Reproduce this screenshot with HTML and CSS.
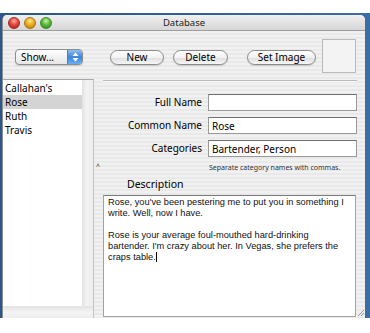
FILE: index.html
```html
<!DOCTYPE html>
<html lang="en">
<head>
    <meta charset="UTF-8">
    <title>Database</title>
    <link rel="stylesheet" href="styles.css">
</head>
<body>

<div class="desktop">
    <div class="window">
        <div class="titlebar">
            <div class="lights">
                <span class="light red"></span>
                <span class="light yellow"></span>
                <span class="light green"></span>
            </div>
            <div class="title">Database</div>
        </div>

        <div class="toolbar">
            <div class="popup">
                <span class="popup-label">Show...</span>
                <span class="stepper">
                    <svg width="7" height="10" viewBox="0 0 7 10"><path d="M3.5 0.5 L6.5 4 L0.5 4 Z M3.5 9.5 L6.5 6 L0.5 6 Z" fill="#fff"/></svg>
                </span>
            </div>
            <button class="pill btn-new">New</button>
            <button class="pill btn-delete">Delete</button>
            <button class="pill btn-image">Set Image</button>
            <div class="image-well"></div>
        </div>

        <div class="content">
            <div class="sidebar">
                <div class="list-row">
                    <ul class="list">
                        <li>Callahan's</li>
                        <li class="selected">Rose</li>
                        <li>Ruth</li>
                        <li>Travis</li>
                    </ul>
                    <div class="list-scroll"></div>
                </div>
                <div class="list-foot"></div>
            </div>

            <div class="editor">
                <div class="separator"></div>
                <div class="fields">
                    <label for="fullName">Full Name</label>
                    <input type="text" id="fullName" value="">
                    <label for="commonName">Common Name</label>
                    <input type="text" id="commonName" value="Rose">
                    <label for="categories">Categories</label>
                    <input type="text" id="categories" value="Bartender, Person">
                </div>
                <div class="hint-row">
                    <span class="caret">^</span>
                    <span class="hint">Separate category names with commas.</span>
                </div>
                <div class="desc-label">Description</div>
                <div class="desc-row">
                    <div class="description">Rose, you've been pestering me to put you in something I write. Well, now I have.

Rose is your average foul-mouthed hard-drinking bartender. I'm crazy about her. In Vegas, she prefers the craps table.<span class="cursor"></span></div>
                    <div class="grip">
                        <svg width="7" height="7" viewBox="0 0 7 7"><path d="M7 1 L1 7 M7 4 L4 7" stroke="#999" stroke-width="1"/></svg>
                    </div>
                </div>
            </div>
        </div>
    </div>
</div>

</body>
</html>
```

FILE: styles.css
```css
body {
    margin: 0;
    padding-top: 13px;
    background: #fff;
    font-family: "Noto Sans", "DejaVu Sans", sans-serif;
    font-size: 10px;
    color: #000;
}
.desktop {
    height: 305px;
    padding: 2px 5px 0 2px;
    box-sizing: border-box;
    background: linear-gradient(90deg, #2b5789 0, #2f5f96 50%, #3b6ea6 100%);
}
.window {
    height: 303px;
    display: flex;
    flex-direction: column;
    border-radius: 5px 5px 0 0;
    overflow: hidden;
    background: repeating-linear-gradient(#f1f1f1 0 2px, #e9e9e9 2px 4px);
    border-left: 1px solid #8e8e8e;
}
.titlebar {
    height: 15px;
    position: relative;
    display: flex;
    align-items: center;
    justify-content: center;
    border-bottom: 1px solid #9c9c9c;
    background: linear-gradient(#f0f0f0, #d6d6d6);
}
.lights {
    position: absolute;
    left: 5px;
    top: 2px;
    display: flex;
    gap: 4px;
}
.light {
    width: 12px;
    height: 12px;
    border-radius: 50%;
    box-sizing: border-box;
}
.red {
    background: radial-gradient(circle at 50% 30%, #ffb0a8 0, #e5473f 45%, #a51c14 100%);
    border: 1px solid #9a2a22;
}
.yellow {
    background: radial-gradient(circle at 50% 30%, #ffe9a0 0, #f0ad1c 45%, #b26d05 100%);
    border: 1px solid #a3761a;
}
.green {
    background: radial-gradient(circle at 50% 30%, #c8f2b0 0, #5cba3c 45%, #2f7c1b 100%);
    border: 1px solid #3f8a2a;
}
.title {
    font-size: 9.5px;
    color: #222;
}
.toolbar {
    height: 48px;
    display: flex;
    align-items: center;
    padding: 4px 9px 0 12px;
    box-sizing: border-box;
}
.popup {
    width: 68px;
    height: 16px;
    display: flex;
    box-sizing: border-box;
    border: 1px solid #8d8d8d;
    border-radius: 4px;
    overflow: hidden;
    background: linear-gradient(#ffffff, #e6e6e6);
    box-shadow: 0 1px 1px rgba(0, 0, 0, 0.15);
}
.popup-label {
    flex: 1;
    padding-left: 5px;
    line-height: 14px;
    font-size: 10px;
}
.stepper {
    width: 14px;
    display: flex;
    align-items: center;
    justify-content: center;
    background: linear-gradient(#8fc0f2, #3b86dc 50%, #6aaef2);
    border-left: 1px solid #4a7fbe;
}
.pill {
    height: 15px;
    padding: 0;
    border: 1px solid #8a8a8a;
    border-radius: 8px;
    background: linear-gradient(#ffffff, #f2f2f2 50%, #dedede 51%, #f6f6f6);
    font-family: "Noto Sans", "DejaVu Sans", sans-serif;
    font-size: 10px;
    line-height: 13px;
    color: #000;
    box-shadow: 0 1px 1px rgba(0, 0, 0, 0.15);
}
.btn-new {
    width: 54px;
    margin-left: 27px;
}
.btn-delete {
    width: 55px;
    margin-left: 9px;
}
.btn-image {
    width: 69px;
    margin-left: 19px;
}
.image-well {
    width: 34px;
    height: 34px;
    margin-left: 6px;
    margin-top: -2px;
    box-sizing: border-box;
    border: 1px solid #b9b9b9;
    background: #f3f3f3;
}
.content {
    flex: 1;
    display: flex;
    min-height: 0;
}
.sidebar {
    width: 90px;
    display: flex;
    flex-direction: column;
    border-right: 1px solid #c4c4c4;
    border-top: 1px solid #a8a8a8;
}
.list-row {
    flex: 1;
    display: flex;
}
.list {
    width: 79px;
    margin: 0;
    padding: 1px 0 0;
    list-style: none;
    background: #fff;
}
.list li {
    height: 14px;
    line-height: 14px;
    padding-left: 2px;
    font-size: 10px;
}
.list .selected {
    background: #d4d4d4;
}
.list-scroll {
    flex: 1;
    background: linear-gradient(90deg, #e2e2e2, #f2f2f2 40%, #eeeeee);
}
.list-foot {
    height: 12px;
    background: linear-gradient(#e2e2e2, #f4f4f4 50%, #eeeeee);
}
.editor {
    flex: 1;
    display: flex;
    flex-direction: column;
    padding: 0 0 1px 0;
}
.separator {
    margin: 1px 8px 0 9px;
    border-top: 1px solid #b9b9b9;
    border-bottom: 1px solid #fbfbfb;
}
.fields {
    display: grid;
    grid-template-columns: 99px 149px;
    column-gap: 6px;
    row-gap: 6px;
    margin: 12px 0 0 9px;
}
.fields label {
    text-align: right;
    line-height: 17px;
    font-size: 10px;
}
.fields input {
    height: 17px;
    margin: 0;
    padding: 0 3px;
    box-sizing: border-box;
    border: 1px solid #9a9a9a;
    border-top-color: #6f6f6f;
    background: #fff;
    font-family: "Noto Sans", "DejaVu Sans", sans-serif;
    font-size: 10px;
    color: #000;
}
.hint-row {
    display: flex;
    margin-top: 5px;
    height: 10px;
    align-items: center;
}
.caret {
    width: 113px;
    padding-left: 2px;
    font-size: 7px;
    line-height: 10px;
    color: #333;
}
.hint {
    font-size: 7px;
    color: #333;
}
.desc-label {
    margin: 5px 0 0 33px;
    line-height: 14px;
    font-size: 10.5px;
}
.desc-row {
    flex: 1;
    display: flex;
    margin: 4px 0 0 9px;
    min-height: 0;
}
.description {
    width: 253px;
    box-sizing: border-box;
    padding: 1px 4px;
    border: 1px solid #a2a2a2;
    border-top-color: #7a7a7a;
    background: #fff;
    white-space: pre-wrap;
    font-family: "Liberation Sans", Arial, sans-serif;
    font-size: 9.25px;
    line-height: 11px;
    color: #111;
}
.cursor {
    display: inline-block;
    width: 0;
    height: 10px;
    border-left: 1px solid #000;
    vertical-align: -2px;
}
.grip {
    flex: 1;
    display: flex;
    align-items: flex-end;
    justify-content: flex-end;
    padding: 0 1px 1px 0;
}
```
